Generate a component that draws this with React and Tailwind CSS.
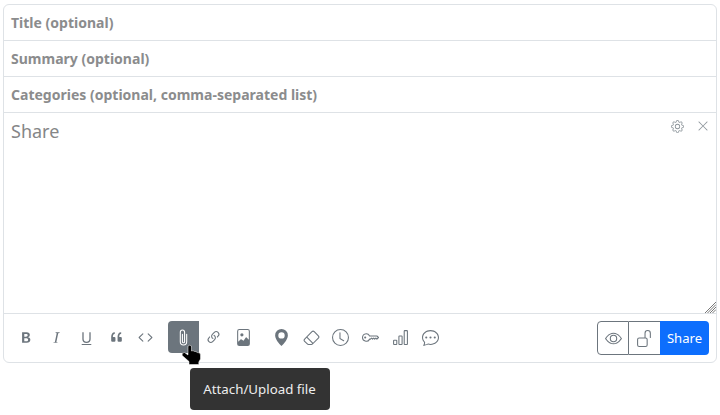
import {
  BsTypeBold, BsTypeItalic, BsTypeUnderline, BsQuote, BsCode, BsPaperclip,
  BsLink45Deg, BsFileImage, BsGeoAltFill, BsEraser, BsClock, BsKey,
  BsBarChart, BsChatDots, BsGear, BsXLg, BsEye, BsUnlock,
} from "react-icons/bs";

const format = [
  ["Bold", BsTypeBold],
  ["Italic", BsTypeItalic],
  ["Underline", BsTypeUnderline],
  ["Quote", BsQuote],
  ["Code", BsCode],
];
const insert = [
  ["Attach/Upload file", BsPaperclip],
  ["Insert link", BsLink45Deg],
  ["Embed image", BsFileImage],
];
const extras = [
  ["Location", BsGeoAltFill],
  ["Clear location", BsEraser],
  ["Schedule", BsClock],
  ["Encrypt", BsKey],
  ["Poll", BsBarChart],
  ["Comments", BsChatDots],
];

function ToolGroup({ items, active, className = "" }) {
  return (
    <div className={`flex ${className}`}>
      {items.map(([label, Icon]) => (
        <button
          key={label}
          aria-label={label}
          className={
            label === active
              ? "relative -mr-[0.4px] flex h-8 w-[31px] items-center justify-center rounded-l bg-[#6c757d] text-white"
              : "flex h-8 w-[29.8px] items-center justify-center text-[#6c757d]"
          }
        >
          <Icon size={17} />
          {label === active && <Pointer />}
        </button>
      ))}
    </div>
  );
}

function Pointer() {
  return (
    <svg viewBox="0 0 20 22" className="absolute left-[13px] top-[23px] z-20 h-[22px] w-5" fill="#000" stroke="#fff" strokeWidth=".5" strokeLinejoin="round">
      <path d="M7 2Q8.500 .5 10.500 2V7Q12 6 13.500 7.500Q15 7 16.200 8.500Q19.500 8 19.500 11V15L17.800 18V20.500H8V17.500L1.200 11.500Q.5 8.500 3.500 8.500L7 11Z" />
    </svg>
  );
}

function Field({ children }) {
  return (
    <div className="flex h-9 items-center border-b border-[#dee2e6] px-[7px] text-[14.02px] font-bold text-[#8b8c8d]">
      {children}
    </div>
  );
}

export default function App() {
  return (
    <div className="h-[415px] w-[720px] overflow-hidden bg-white pl-[3px] pt-1 font-['Noto_Sans',sans-serif]">
      <div className="h-[359px] w-[714px] rounded-md border border-[#dee2e6]">
        <Field>Title (optional)</Field>
        <Field>Summary (optional)</Field>
        <Field>Categories (optional, comma-separated list)</Field>
        <div className="flex h-[201px] flex-col justify-between border-b border-[#dee2e6]">
          <div className="flex justify-between pl-[7px] pr-[7px]">
            <span className="pt-[5px] text-[18px] leading-[27px] text-[#858687]">Share</span>
            <div className="flex h-[26px] items-center gap-[13px] text-[#8d959b]">
              <BsGear size={13} />
              <BsXLg size={12} />
            </div>
          </div>
          <svg className="h-[11px] w-[11px] self-end" viewBox="0 0 11 11" stroke="#777" fill="none">
            <path d="M0 11L11 0M2.500 11L11 2.500M5 11L11 5M7.500 11L11 7.500" />
          </svg>
        </div>
        <div className="flex h-[48px] items-center justify-between pl-[7.8px] pr-[7px]">
          <div className="flex pb-0.5">
            <ToolGroup items={format} />
            <ToolGroup items={insert} active="Attach/Upload file" className="ml-[7.2px]" />
            <ToolGroup items={extras} className="ml-[8.2px]" />
          </div>
          <div className="flex h-[34px] text-[#6c757d]">
            <button aria-label="Preview" className="flex w-8 items-center justify-center rounded-l border border-[#6c757d]">
              <BsEye size={17} />
            </button>
            <button aria-label="Permissions" className="flex w-[31px] items-center justify-center border-y border-[#6c757d]">
              <BsUnlock size={17} />
            </button>
            <button className="w-[49px] rounded-r bg-[#0d6efd] pt-px text-[13.1px] text-white">Share</button>
          </div>
        </div>
      </div>
      <div className="ml-[187px] mt-[5px] flex h-[42px] w-[140px] items-center justify-center rounded bg-[#333] pr-px pt-0.5 text-[13.3px] text-[#eee]">
        Attach/Upload file
      </div>
    </div>
  );
}
